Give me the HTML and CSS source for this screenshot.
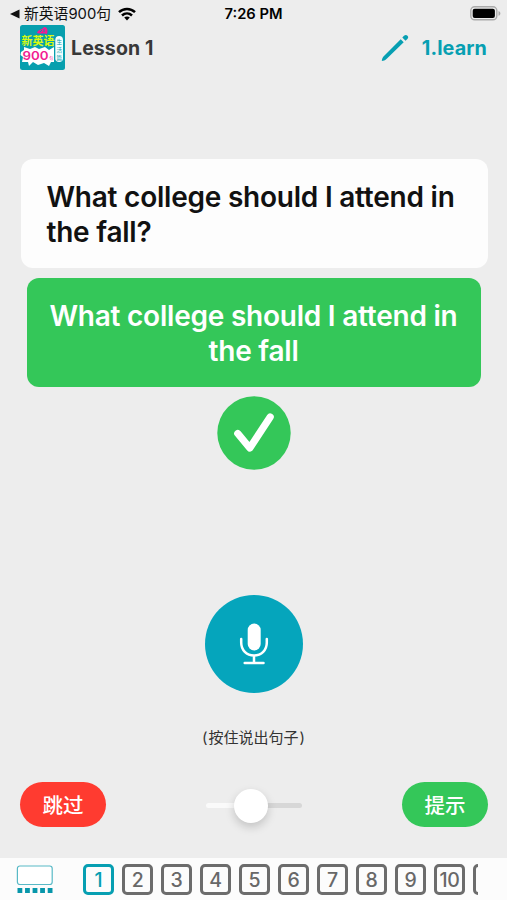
FILE: index.html
```html
<!DOCTYPE html>
<html lang="zh-CN">
<head>
    <meta charset="UTF-8">
    <meta name="viewport" content="width=device-width, initial-scale=1.0">
    <title>Lesson 1</title>
    <link rel="stylesheet" href="styles.css">
</head>
<body>
    <div class="app">
        <div class="status-bar">
            <div class="status-left">
                <svg class="back-arrow" width="10" height="10" viewBox="0 0 10 10"><path d="M0 5L9.5 0.5V9.5Z" fill="#111"/></svg>
                <span class="back-app">新英语900句</span>
                <svg class="wifi" width="18" height="14" viewBox="0 0 18 14">
                    <g fill="none" stroke="#000" stroke-width="2.5">
                        <path d="M1 5.2C5.5 0.9 12.5 0.9 17 5.2"/>
                        <path d="M4 8.5C6.9 5.8 11.1 5.8 14 8.5"/>
                    </g>
                    <path d="M6.2 10.6C7.8 9.2 10.2 9.2 11.8 10.6L9 13.5Z"/>
                </svg>
            </div>
            <span class="status-time">7:26 PM</span>
            <svg class="battery" width="31" height="15" viewBox="0 0 31 15">
                <rect x="0.8" y="0.8" width="26" height="13" rx="3.8" fill="#ededed" stroke="#aaa" stroke-width="1.4"/>
                <rect x="2.7" y="2.7" width="22.2" height="9.2" rx="2"/>
                <path d="M28.5 5V9.8C31 9 31 5.8 28.5 5Z" fill="#aaa"/>
            </svg>
        </div>

        <header class="header">
            <svg class="app-icon" width="45" height="45" viewBox="0 0 45 45">
                <rect width="45" height="45" rx="2.5" fill="#079fae"/>
                <path d="M1 27L4 25L4 22L10 24L15 22L19 24L25 22L29 25L34 22V37L31 37L29 41L24 38L18 40L13 37L9 41L8 37L2 37L3 32L0.5 30Z" fill="#fff"/>
                <path d="M17 8C18 4 22 5 24 2C28 2 28 6 27 9C23 8 20 9 17 8Z" fill="#f21c92"/>
                <path d="M20 7L22 5M24 7L24 4" stroke="#079fae"/>
                <text class="logo-title" x="1.5" y="20" textLength="33" lengthAdjust="spacingAndGlyphs">新英语</text>
                <text class="logo-number" x="2.5" y="35" textLength="26" lengthAdjust="spacingAndGlyphs">900</text>
                <text class="logo-small" x="29.3" y="35">句</text>
                <rect x="35.3" y="11" width="7.7" height="26" rx="3.8" fill="#f3fdff"/>
                <text class="logo-side" x="36.4" y="18.5">生</text>
                <text class="logo-side" x="36.4" y="26.5">活</text>
                <text class="logo-side" x="36.4" y="34.5">篇</text>
            </svg>
            <h1 class="lesson-title">Lesson 1</h1>
            <div class="mode">
                <svg width="28" height="28" viewBox="0 0 28 28" fill="#079fb2">
                    <path d="M0.8 27C1 24.8 1.5 23.5 3 22L19.7 5.3L22.7 8.3L6 24.5C4 26.3 2.5 26.9 0.8 27Z"/>
                    <path d="M21.3 3.6L23 1.8C25.3 -0.5 28.7 2.6 26.4 5L24.5 6.8Z"/>
                </svg>
                <span class="mode-name">1.learn</span>
            </div>
        </header>

        <main class="lesson">
            <div class="question">What college should I attend in<br>the fall?</div>
            <div class="answer">What college should I attend in<br>the fall</div>
            <div class="result">
                <svg width="74" height="74" viewBox="0 0 74 74">
                    <circle cx="37" cy="37" r="36.7" fill="#34c759"/>
                    <path d="M20.8 37.5L32.8 52L53.2 21" fill="none" stroke="#fff" stroke-width="7.2" stroke-linecap="round" stroke-linejoin="round"/>
                </svg>
            </div>
        </main>

        <div class="record">
            <button class="mic-button" aria-label="按住说出句子">
                <svg width="30" height="44" viewBox="0 0 30 44">
                    <rect x="8.7" y="1.5" width="13" height="27" rx="6.5" fill="#fff"/>
                    <path d="M2.2 17V20.5C2.2 28 7.5 33.5 15 33.5S27.8 28 27.8 20.5V17M15 33.5V41M5.7 41H24.5" fill="none" stroke="#fff" stroke-width="2.5" stroke-linecap="round"/>
                </svg>
            </button>
            <p class="record-hint"><span>(</span>按住说出句子<span>)</span></p>
        </div>

        <div class="controls">
            <button class="pill skip">跳过</button>
            <div class="slider"><div class="knob"></div></div>
            <button class="pill hint">提示</button>
        </div>

        <footer class="pager">
            <svg class="gallery" width="38" height="29" viewBox="0 0 38 29">
                <rect x="1.4" y="1" width="34.8" height="18.5" rx="2.5" fill="#fff" stroke="#58b9c6" stroke-width="1.2"/>
                <path d="M1.5 25.5H37" stroke="#0796aa" stroke-width="4.8" stroke-dasharray="4.8 2.75"/>
            </svg>
            <div class="pages">
                <span class="page active">1</span>
                <span class="page">2</span>
                <span class="page">3</span>
                <span class="page">4</span>
                <span class="page">5</span>
                <span class="page">6</span>
                <span class="page">7</span>
                <span class="page">8</span>
                <span class="page">9</span>
                <span class="page">10</span>
                <span class="page"></span>
            </div>
        </footer>
    </div>
</body>
</html>
```

FILE: styles.css
```css
* {
    box-sizing: border-box;
}

body {
    margin: 0;
    background-color: #ededed;
    font-family: Inter, "Noto Sans CJK SC", sans-serif;
    color: #111;
}

svg {
    display: block;
    flex-shrink: 0;
}

.app {
    width: 507px;
    height: 900px;
    display: flex;
    flex-direction: column;
    overflow: hidden;
}

/* Status bar */
.status-bar {
    height: 25px;
    padding: 2px 6px 0 10px;
    display: grid;
    grid-template-columns: 1fr auto 1fr;
    align-items: center;
}

.status-left {
    display: flex;
    align-items: center;
}

.back-app {
    margin: 0 7px 0 4px;
    font-size: 14.8px;
    line-height: 20px;
    white-space: nowrap;
}

.status-time {
    margin-right: 4px;
    font-size: 14.7px;
    font-weight: 600;
    color: #000;
}

.battery {
    justify-self: end;
}

/* Header */
.header {
    height: 45px;
    padding: 0 20px;
    display: flex;
    align-items: center;
}

.lesson-title {
    margin: 0 0 0 6px;
    font-size: 19.5px;
    font-weight: 700;
    letter-spacing: 0.1px;
    color: #383838;
}

.mode {
    margin-left: auto;
    display: flex;
    align-items: center;
    gap: 13px;
}

.mode-name {
    font-size: 19.8px;
    font-weight: 700;
    letter-spacing: 0.1px;
    color: #079fb2;
}

.logo-title {
    font-size: 11px;
    font-weight: 700;
    fill: #d9fa10;
}

.logo-number {
    font-size: 12px;
    font-weight: 600;
    fill: #f21c92;
}

.logo-small {
    font-size: 4px;
    fill: #f21c92;
}

.logo-side {
    font-size: 5.5px;
    fill: #079fae;
}

/* Sentences */
.lesson {
    padding-top: 89px;
    height: 525px;
    display: flex;
    flex-direction: column;
    align-items: center;
}

.question,
.answer {
    height: 109px;
    border-radius: 12px;
    font-size: 28px;
    font-weight: 600;
    line-height: 35px;
    letter-spacing: -0.23px;
    white-space: nowrap;
}

.question {
    width: 467px;
    margin-left: 1px;
    padding: 21px 26px;
    background-color: #fdfdfd;
}

.answer {
    width: 454px;
    margin-top: 10px;
    padding: 21px 0;
    background-color: #34c759;
    color: #fff;
    text-align: center;
}

.result {
    margin-top: 9px;
}

/* Microphone */
.record {
    height: 187px;
    display: flex;
    flex-direction: column;
    align-items: center;
}

.mic-button {
    width: 98px;
    height: 98px;
    padding: 0;
    display: flex;
    align-items: center;
    justify-content: center;
    border: none;
    border-radius: 50%;
    background-color: #05a5bc;
}

.record-hint {
    margin: 35px 0 0;
    font-size: 15px;
    line-height: 20px;
    color: #333;
}

.record-hint span {
    margin: 0 1px;
}

/* Bottom controls */
.controls {
    height: 76px;
    padding: 0 19px 0 20px;
    display: flex;
    justify-content: space-between;
    align-items: flex-start;
}

.pill {
    width: 86px;
    height: 45px;
    padding: 0 0 2px;
    border: none;
    border-radius: 23px;
    color: #fff;
    font-family: inherit;
    font-size: 20.5px;
    font-weight: 500;
}

.skip {
    background-color: #ff3b30;
}

.hint {
    background-color: #34c759;
}

.slider {
    width: 96px;
    height: 5px;
    margin-top: 21px;
    display: flex;
    align-items: center;
    border-radius: 3px;
    background: linear-gradient(to right, #fafafa 45px, #d7d7d7 45px);
}

.knob {
    width: 34px;
    height: 34px;
    margin-left: 28px;
    flex-shrink: 0;
    border-radius: 50%;
    background-color: #fff;
    box-shadow: 0 4px 10px rgba(0, 0, 0, 0.18);
}

/* Page numbers */
.pager {
    height: 42px;
    padding: 6px 29px 0 16px;
    display: flex;
    background-color: #fcfcfc;
}

.gallery {
    margin-top: 1px;
}

.pages {
    margin-left: 29px;
    flex: 1;
    display: flex;
    gap: 8px;
    overflow: hidden;
}

.page {
    width: 31px;
    height: 31px;
    flex-shrink: 0;
    border: 3px solid #6c6c6c;
    border-radius: 5px;
    color: #686868;
    font-size: 19.5px;
    font-weight: 500;
    line-height: 26px;
    letter-spacing: -0.3px;
    text-align: center;
}

.active {
    border-color: #079fb2;
    color: #079fb2;
}
```
